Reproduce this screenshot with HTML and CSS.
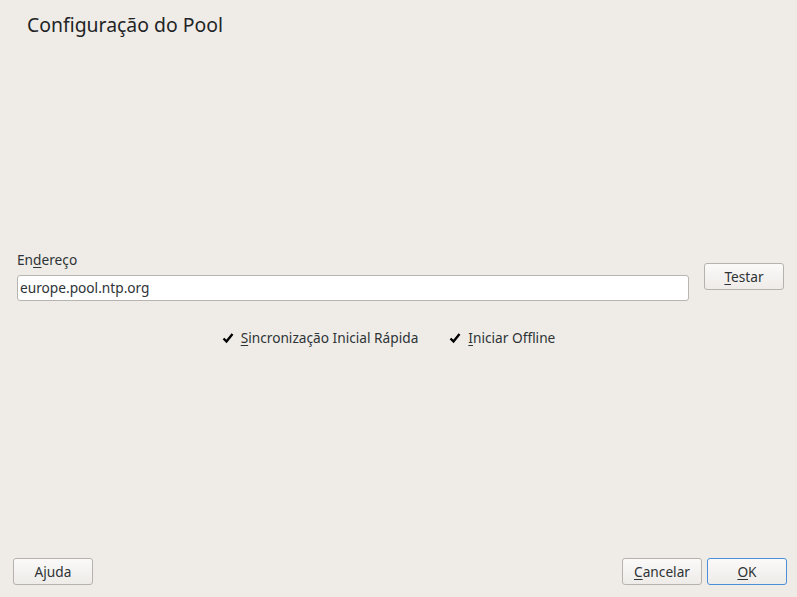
FILE: index.html
```html
<!DOCTYPE html>
<html>
<head>
<meta charset="utf-8">
<link rel="stylesheet" href="styles.css">
</head>
<body>
<div class="dialog">
  <h1 class="title">Configuração do Pool</h1>
  <div class="spacer-top"></div>
  <div class="address-row">
    <div class="address-field">
      <label class="label">En<u>d</u>ereço</label>
      <div class="input">europe.pool.ntp.org</div>
    </div>
    <button class="btn test-btn"><u>T</u>estar</button>
  </div>
  <div class="checks">
    <label class="check"><svg class="box" viewBox="0 0 12 12"><path d="M1.5 6.5 L4.5 9.5 L10.5 2" fill="none" stroke="#000" stroke-width="2.4"/></svg><span><u>S</u>incronização Inicial Rápida</span></label>
    <label class="check"><svg class="box" viewBox="0 0 12 12"><path d="M1.5 6.5 L4.5 9.5 L10.5 2" fill="none" stroke="#000" stroke-width="2.4"/></svg><span><u>I</u>niciar Offline</span></label>
  </div>
  <div class="spacer-bottom"></div>
  <div class="footer">
    <button class="btn">Ajuda</button>
    <div class="right">
      <button class="btn"><u>C</u>ancelar</button>
      <button class="btn primary"><u>O</u>K</button>
    </div>
  </div>
</div>
</body>
</html>
```
FILE: styles.css
```css
html, body {
  margin: 0;
  padding: 0;
  background: #efece8;
}
body {
  font-family: "Noto Sans", sans-serif;
  font-size: 13.7px;
  color: #2e3436;
}
.dialog {
  width: 797px;
  height: 597px;
  display: flex;
  flex-direction: column;
  box-sizing: border-box;
}
.title {
  margin: 0;
  padding: 11px 0 0 27px;
  font-size: 19.4px;
  font-weight: normal;
  line-height: 28px;
  color: #1f2426;
}
.spacer-top {
  height: 211px;
}
.address-row {
  display: flex;
  align-items: flex-start;
  padding: 0 13px 0 17px;
  gap: 15px;
}
.address-field {
  flex: 1;
  display: flex;
  flex-direction: column;
}
.label {
  line-height: 20px;
  margin-bottom: 5px;
}
u {
  text-decoration: underline;
  text-underline-offset: 2px;
}
.input {
  height: 26px;
  box-sizing: border-box;
  border: 1px solid #b8b5b0;
  border-radius: 3px;
  background: #fff;
  padding: 0 2px;
  line-height: 24px;
}
.btn {
  font-family: "Noto Sans", sans-serif;
  font-size: 13.7px;
  color: #2e3436;
  width: 80px;
  height: 27px;
  box-sizing: border-box;
  border: 1px solid #b6b3ae;
  border-radius: 3px;
  background: linear-gradient(#fbfaf9, #eeebe8);
  padding: 0;
}
.test-btn {
  margin-top: 13px;
}
.checks {
  display: flex;
  justify-content: center;
  gap: 31px;
  margin-top: 27px;
  padding-right: 20px;
}
.check {
  display: flex;
  align-items: center;
  gap: 7px;
}
.box {
  width: 12px;
  height: 12px;
}
.spacer-bottom {
  flex: 1;
}
.footer {
  display: flex;
  justify-content: space-between;
  padding: 0 10px 12px 13px;
}
.right {
  display: flex;
  gap: 5px;
}
.primary {
  border-color: #4a90d9;
}
```
